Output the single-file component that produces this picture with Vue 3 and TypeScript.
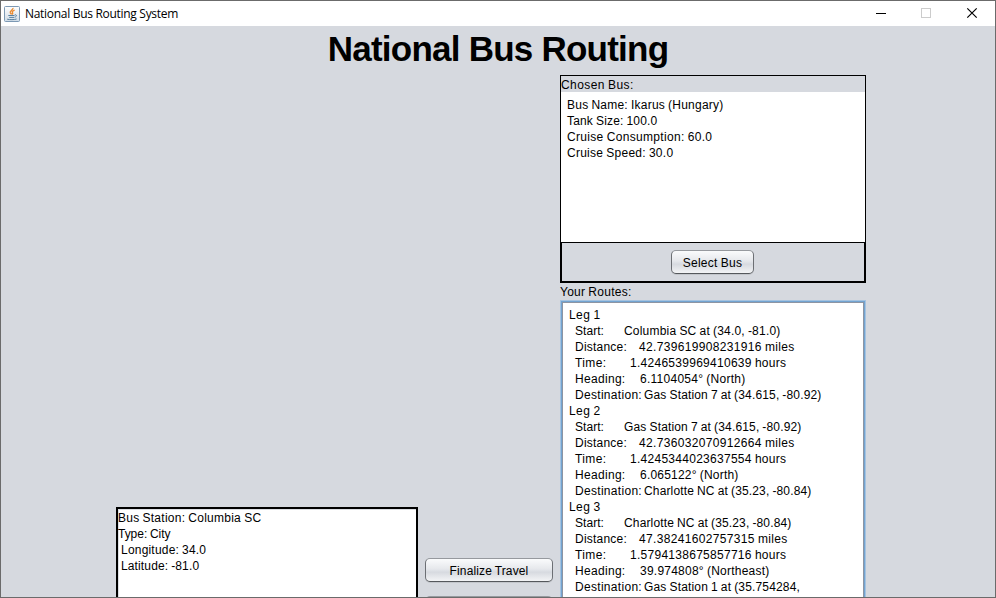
<script setup lang="ts">
interface Line {
  text: string
  width: number
}
interface Detail {
  kind: string
  label: Line
  value: Line
}
interface Leg {
  name: string
  details: Detail[]
}

const UI_FONT = '12px "Liberation Sans"'
const TITLE_FONT = '12px "Open Sans"'
const HEADING_FONT = 'bold 35px "Liberation Sans"'
const WORD_SPACING = -0.5
const context = document.createElement('canvas').getContext('2d')

// Tracking that makes a string as wide as its target advance.
function fit(line: Line, font: string = UI_FONT) {
  if (!context) return {}
  context.font = font
  const spaces = (line.text.match(/[ \u00a0]/g) || []).length
  const word = font === UI_FONT ? WORD_SPACING * spaces : 0
  const gap = (line.width - word - context.measureText(line.text).width) / line.text.length
  return { letterSpacing: `${gap.toFixed(3)}px` }
}

const t = (text: string, width: number): Line => ({ text, width })

const labels: Record<string, Line> = {
  start: t('Start:', 29),
  distance: t('Distance:', 52),
  time: t('Time:', 31.5),
  heading: t('Heading:', 50.5),
  destination: t('Destination:', 67),
}
const detail = (kind: string, text: string, width: number): Detail => ({
  kind,
  label: labels[kind],
  value: t(text, width),
})

const windowTitle = t('National Bus Routing System', 153)
const heading = t('National Bus Routing', 340.5)
const busLines = [
  t('Bus Name: Ikarus (Hungary)', 156.5),
  t('Tank Size: 100.0', 90.3),
  t('Cruise Consumption: 60.0', 145.3),
  t('Cruise Speed: 30.0', 106.3),
]
const stationLines = [
  t('Bus Station: Columbia SC', 143.3),
  t('Type: City', 52.5),
  t('\u00a0Longitude: 34.0', 88.2),
  t('\u00a0Latitude: -81.0', 81.2),
]
const legs: Leg[] = [
  {
    name: 'Leg 1',
    details: [
      detail('start', 'Columbia SC at (34.0, -81.0)', 156.5),
      detail('distance', '42.739619908231916 miles', 155.6),
      detail('time', '1.4246539969410639 hours', 156.3),
      detail('heading', '6.1104054° (North)', 105.5),
      detail('destination', 'Gas Station 7 at (34.615, -80.92)', 177.5),
    ],
  },
  {
    name: 'Leg 2',
    details: [
      detail('start', 'Gas Station 7 at (34.615, -80.92)', 177.5),
      detail('distance', '42.736032070912664 miles', 155.6),
      detail('time', '1.4245344023637554 hours', 156.3),
      detail('heading', '6.065122° (North)', 98.5),
      detail('destination', 'Charlotte NC at (35.23, -80.84)', 167.5),
    ],
  },
  {
    name: 'Leg 3',
    details: [
      detail('start', 'Charlotte NC at (35.23, -80.84)', 167.5),
      detail('distance', '47.38241602757315 miles', 148.6),
      detail('time', '1.5794138675857716 hours', 156.3),
      detail('heading', '39.974808° (Northeast)', 129.5),
      detail('destination', 'Gas Station 1 at (35.754284,', 156),
    ],
  },
]
const legWidth = 31.5
</script>

<template>
  <div class="window">
    <header class="titlebar">
      <svg class="java" width="16" height="16" viewBox="0 0 16 16">
        <defs>
          <linearGradient id="tile" x1="0" y1="0" x2="0" y2="1">
            <stop offset="0" stop-color="#fff" />
            <stop offset="1" stop-color="#cfdbe6" />
          </linearGradient>
        </defs>
        <rect x=".5" y=".5" width="15" height="15" rx="1" fill="url(#tile)" stroke="#7d99b4" />
        <path d="M9 2C9.4 3.8 5.4 4.8 6.3 6.8c.3.6.9 1 1.1 1.6M10.6 4.2C8.9 4.9 7.7 5.6 8.5 6.7c.5.8.2 1.2-.3 1.7" fill="none" stroke="#ea8a30" stroke-width="1.4" />
        <path d="M4.3 9.5h6.2M5.2 11.4h4.9M10.8 8.8c2.4-.4 2.2 1.9-.2 2.4M3.2 13.2c2.4.6 7.2.6 9.4-.2" fill="none" stroke="#5880a0" stroke-width="1" />
      </svg>
      <span class="caption" :style="fit(windowTitle, TITLE_FONT)">{{ windowTitle.text }}</span>
      <svg class="controls" width="138" height="25" viewBox="0 0 138 25" fill="none">
        <path d="M18 12.5h10" stroke="#000" />
        <rect x="63.5" y="7.5" width="9" height="9" stroke="#ccc" />
        <path d="M109.3 7.3l9.4 9.4M118.7 7.3l-9.4 9.4" stroke="#000" stroke-width="1.2" />
      </svg>
    </header>

    <main class="content">
      <h1><span :style="fit(heading, HEADING_FONT)">{{ heading.text }}</span></h1>
      <div class="columns">
        <section class="station">
          <div v-for="line in stationLines" :key="line.text" :style="fit(line)">{{ line.text }}</div>
        </section>
        <div class="actions">
          <button type="button"><span :style="fit(t('Finalize Travel', 79))">Finalize Travel</span></button>
          <button type="button"></button>
        </div>
        <div class="side">
          <section class="bus">
            <div class="bus-label" :style="fit(t('Chosen Bus:', 72.7))">Chosen Bus:</div>
            <div class="bus-info">
              <div v-for="line in busLines" :key="line.text" :style="fit(line)">{{ line.text }}</div>
            </div>
            <div class="bus-footer">
              <button type="button"><span :style="fit(t('Select Bus', 59.5))">Select Bus</span></button>
            </div>
          </section>
          <div class="routes-label" :style="fit(t('Your Routes:', 71.5))">Your Routes:</div>
          <section class="routes">
            <template v-for="leg in legs" :key="leg.name">
              <div :style="fit(t(leg.name, legWidth))">{{ leg.name }}</div>
              <div v-for="d in leg.details" :key="d.kind" class="detail">
                <span class="label" :class="d.kind" :style="fit(d.label)">{{ d.label.text }}</span>
                <span :style="fit(d.value)">{{ d.value.text }}</span>
              </div>
            </template>
          </section>
        </div>
      </div>
    </main>
  </div>
</template>

<style>
body {
  margin: 0;
  overflow: hidden;
}
</style>

<style scoped>
.window {
  box-sizing: border-box;
  width: 996px;
  height: 598px;
  display: flex;
  flex-direction: column;
  overflow: hidden;
  border: 1px solid #6b6b6b;
  background: #d6d9df;
  color: #000;
  font: 12px/16px "Liberation Sans", Arial, sans-serif;
  white-space: nowrap;
  word-spacing: -0.5px;
}
.titlebar {
  flex: 0 0 25px;
  display: flex;
  align-items: center;
  padding-left: 3px;
  background: #fff;
}
.caption {
  margin-left: 5px;
  font-family: "Open Sans", sans-serif;
  word-spacing: 0;
}
.controls {
  margin-left: auto;
  margin-right: -1px;
}
.content {
  flex: 1;
  min-height: 0;
  display: flex;
  flex-direction: column;
}
h1 {
  flex: 0 0 49px;
  margin: 0;
  font-size: 35px;
  line-height: 46px;
  text-align: center;
  word-spacing: 0;
}
.columns {
  flex: 1;
  min-height: 0;
  display: flex;
  align-items: stretch;
  padding-left: 115px;
}
.station {
  box-sizing: border-box;
  width: 302px;
  height: 140px;
  margin-top: 432px;
  border: 2px solid #000;
  padding-top: 1px;
  background: #fff;
  box-shadow: inset 1px 1px #dcdee2;
}
.actions {
  display: flex;
  flex-direction: column;
  gap: 14px;
  width: 128px;
  margin: 483px 7px 0;
}
button {
  box-sizing: border-box;
  flex: 0 0 24px;
  height: 24px;
  padding: 2px 0 0;
  border: 1px solid #6c6f74;
  border-top-color: #96999e;
  border-bottom-color: #55585c;
  border-radius: 5px;
  background: linear-gradient(#fafbfc 0%, #e6e8ec 45%, #d7dae0 60%, #f3f4f6 100%);
  box-shadow: 0 1px #c3c6cb;
  color: #000;
  font: inherit;
  line-height: 16px;
  word-spacing: inherit;
}
.side {
  width: 306px;
}
.bus {
  box-sizing: border-box;
  height: 208px;
  display: flex;
  flex-direction: column;
  border: 1px solid #000;
}
.bus-label {
  height: 16px;
  line-height: 18px;
}
.bus-info {
  box-sizing: border-box;
  flex: 1;
  padding: 5px 6px;
  background: #fff;
}
.bus-footer {
  flex: 0 0 38px;
  display: flex;
  align-items: center;
  justify-content: center;
  padding-right: 1px;
  border: 1px solid #000;
}
.bus-footer button {
  width: 83px;
  flex-basis: 83px;
}
.routes-label {
  height: 17px;
  line-height: 18px;
}
.routes {
  box-sizing: border-box;
  height: 320px;
  padding: 6px 8px;
  border: 1px solid #a5c3e0;
  box-shadow: inset 0 0 0 1px #73a4d1, inset 0 0 0 2px #8d95a3;
  background: #fff;
}
.detail {
  display: flex;
  padding-left: 6px;
}
.start {
  width: 49px;
}
.distance {
  width: 64px;
}
.time {
  width: 55px;
}
.heading {
  width: 65px;
}
.destination {
  width: 69px;
}
</style>
